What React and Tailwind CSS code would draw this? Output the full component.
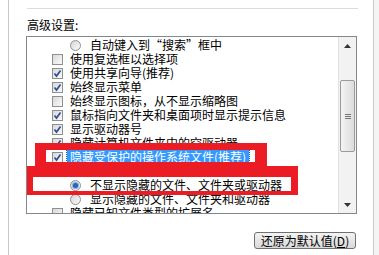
import React from "react";

const FONT = { fontFamily: '"Noto Sans CJK SC", "Noto Sans", sans-serif' };

const rows = [
  { type: "radio", label: "自动键入到“搜索”框中" },
  { type: "check", label: "使用复选框以选择项" },
  { type: "check", checked: true, label: "使用共享向导(推荐)" },
  { type: "check", checked: true, label: "始终显示菜单" },
  { type: "check", label: "始终显示图标，从不显示缩略图" },
  { type: "check", checked: true, label: "鼠标指向文件夹和桌面项时显示提示信息" },
  { type: "check", checked: true, label: "显示驱动器号" },
  { type: "check", checked: true, label: "隐藏计算机文件夹中的空驱动器" },
  { type: "check", checked: true, selected: true, label: "隐藏受保护的操作系统文件(推荐)" },
  { type: "folder", label: "隐藏文件和文件夹" },
  { type: "radio", checked: true, label: "不显示隐藏的文件、文件夹或驱动器" },
  { type: "radio", label: "显示隐藏的文件、文件夹和驱动器" },
  { type: "check", label: "隐藏已知文件类型的扩展名" },
];

const CheckBox = ({ checked }) => (
  <span className="w-[11px] h-[11px] border border-[#8e8f8f] bg-gradient-to-br from-[#d8d8d8] to-[#fbfbfb] flex items-center justify-center shrink-0">
    {checked && (
      <svg width="9" height="9" viewBox="0 0 9 9">
        <path d="M1.5 4.5 L3.5 7 L7.5 1.5" fill="none" stroke="#2c4f95" strokeWidth="1.7" />
      </svg>
    )}
  </span>
);

const Radio = ({ checked }) => (
  <span className="w-[11px] h-[11px] rounded-full border border-[#8e8f8f] bg-gradient-to-br from-[#d6d6d6] to-[#fbfbfb] flex items-center justify-center shrink-0">
    {checked && <span className="w-[5px] h-[5px] rounded-full bg-[#2a66b8] ring-1 ring-[#7fb0e6]" />}
  </span>
);

const Row = ({ row }) => {
  if (row.type === "radio") {
    return (
      <div className="h-[14px] flex items-center pl-[43px]">
        <Radio checked={row.checked} />
        <span className="ml-[9px] whitespace-nowrap">{row.label}</span>
      </div>
    );
  }
  if (row.type === "folder") {
    return (
      <div className="h-[14px] flex items-center pl-[25px]">
        <span className="w-[11px] h-[9px] bg-[#e8c55c] shrink-0" />
        <span className="ml-[7px] whitespace-nowrap">{row.label}</span>
      </div>
    );
  }
  return (
    <div className="h-[14px] flex items-center pl-[25px]">
      <CheckBox checked={row.checked} />
      {row.selected ? (
        <span className="ml-[4px] px-[3px] bg-[#3399ff] text-white whitespace-nowrap outline-1 outline-dotted outline-[#1c5fb0]">
          {row.label}
        </span>
      ) : (
        <span className="ml-[7px] whitespace-nowrap">{row.label}</span>
      )}
    </div>
  );
};

const ScrollBar = () => (
  <div className="w-[18px] border-l border-[#e2e2e2] bg-[#f2f2f2] flex flex-col items-center shrink-0">
    <div className="h-[17px] flex items-center justify-center">
      <svg width="7" height="4" viewBox="0 0 7 4">
        <polygon points="0,4 7,4 3.5,0" fill="#333" />
      </svg>
    </div>
    <div className="h-[26px]" />
    <div className="w-[15px] h-[72px] rounded-[2px] border border-[#9a9a9a] bg-gradient-to-r from-[#f4f4f4] to-[#dcdcdc] flex flex-col items-center justify-center gap-[1px]">
      <span className="w-[6px] h-px bg-[#777]" />
      <span className="w-[6px] h-px bg-[#777]" />
      <span className="w-[6px] h-px bg-[#777]" />
    </div>
    <div className="flex-1" />
    <div className="h-[17px] flex items-center justify-center">
      <svg width="7" height="4" viewBox="0 0 7 4">
        <polygon points="0,0 7,0 3.5,4" fill="#333" />
      </svg>
    </div>
  </div>
);

export default function App() {
  return (
    <div className="w-[379px] h-[255px] bg-white flex overflow-hidden relative text-[12px] text-black" style={FONT}>
      <div className="w-[8px] shrink-0" />
      <div className="w-[366px] h-full border-l border-r border-[#c9c9c9] flex flex-col">
        <div className="mt-[8px] ml-[18px] w-[331px] h-px bg-[#dcdcdc]" />
        <div className="mt-[9px] ml-[18px] h-[14px] leading-[14px]">高级设置:</div>
        <div className="mt-[4px] ml-[17px] w-[331px] h-[178px] border border-[#828790] flex overflow-hidden">
          <div className="flex-1 pt-[1px] overflow-hidden leading-[14px]">
            {rows.map((row, i) => (
              <Row key={i} row={row} />
            ))}
          </div>
          <ScrollBar />
        </div>
        <div className="mt-[18px] self-end mr-[17px] w-[102px] h-[17px] rounded-[3px] border border-[#707070] bg-gradient-to-b from-[#f3f3f3] to-[#d9d9d9] flex items-center justify-center leading-[14px]">
          还原为默认值(<span className="underline">D</span>)
        </div>
      </div>
      <div className="flex-1 bg-[#f4f4f4]" />

      {/* red annotation boxes */}
      <div className="absolute left-[35px] top-[143px] w-[232px] h-[23px] border-[#ec1c24] border-t-[7px] border-b-[4px] border-l-[11px] border-r-[12px]" />
      <div className="absolute left-[27px] top-[166px] w-[271px] h-[29px] border-[#ec1c24] border-t-[11px] border-b-[4px] border-l-[6px] border-r-[7px]" />
    </div>
  );
}
